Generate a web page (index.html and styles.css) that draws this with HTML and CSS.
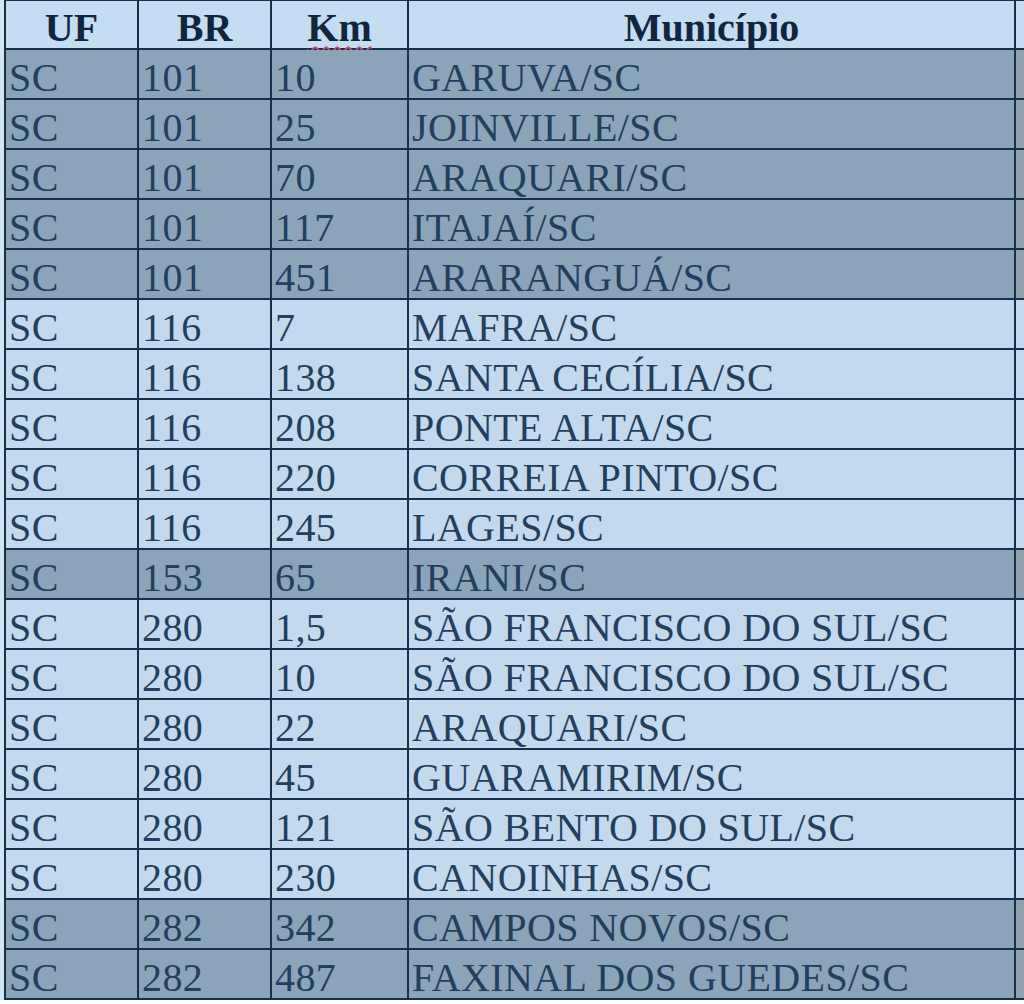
FILE: index.html
```html
<!DOCTYPE html>
<html lang="pt">
<head>
<meta charset="utf-8">
<title>Tabela</title>
<link rel="stylesheet" href="styles.css">
</head>
<body>
<div class="sheet">
  <div class="grid">
    <div class="cell head">UF</div>
    <div class="cell head">BR</div>
    <div class="cell head"><span class="spell">Km</span></div>
    <div class="cell head">Município</div>
    <div class="cell edge head-edge"></div>

    <div class="cell dark">SC</div><div class="cell dark">101</div><div class="cell dark">10</div><div class="cell dark">GARUVA/SC</div><div class="cell edge dark-edge"></div>
    <div class="cell dark">SC</div><div class="cell dark">101</div><div class="cell dark">25</div><div class="cell dark">JOINVILLE/SC</div><div class="cell edge dark-edge"></div>
    <div class="cell dark">SC</div><div class="cell dark">101</div><div class="cell dark">70</div><div class="cell dark">ARAQUARI/SC</div><div class="cell edge dark-edge"></div>
    <div class="cell dark">SC</div><div class="cell dark">101</div><div class="cell dark">117</div><div class="cell dark">ITAJAÍ/SC</div><div class="cell edge dark-edge"></div>
    <div class="cell dark">SC</div><div class="cell dark">101</div><div class="cell dark">451</div><div class="cell dark">ARARANGUÁ/SC</div><div class="cell edge dark-edge"></div>
    <div class="cell">SC</div><div class="cell">116</div><div class="cell">7</div><div class="cell">MAFRA/SC</div><div class="cell edge"></div>
    <div class="cell">SC</div><div class="cell">116</div><div class="cell">138</div><div class="cell">SANTA CECÍLIA/SC</div><div class="cell edge"></div>
    <div class="cell">SC</div><div class="cell">116</div><div class="cell">208</div><div class="cell">PONTE ALTA/SC</div><div class="cell edge"></div>
    <div class="cell">SC</div><div class="cell">116</div><div class="cell">220</div><div class="cell">CORREIA PINTO/SC</div><div class="cell edge"></div>
    <div class="cell">SC</div><div class="cell">116</div><div class="cell">245</div><div class="cell">LAGES/SC</div><div class="cell edge"></div>
    <div class="cell dark">SC</div><div class="cell dark">153</div><div class="cell dark">65</div><div class="cell dark">IRANI/SC</div><div class="cell edge dark-edge"></div>
    <div class="cell">SC</div><div class="cell">280</div><div class="cell">1,5</div><div class="cell">SÃO FRANCISCO DO SUL/SC</div><div class="cell edge"></div>
    <div class="cell">SC</div><div class="cell">280</div><div class="cell">10</div><div class="cell">SÃO FRANCISCO DO SUL/SC</div><div class="cell edge"></div>
    <div class="cell">SC</div><div class="cell">280</div><div class="cell">22</div><div class="cell">ARAQUARI/SC</div><div class="cell edge"></div>
    <div class="cell">SC</div><div class="cell">280</div><div class="cell">45</div><div class="cell">GUARAMIRIM/SC</div><div class="cell edge"></div>
    <div class="cell">SC</div><div class="cell">280</div><div class="cell">121</div><div class="cell">SÃO BENTO DO SUL/SC</div><div class="cell edge"></div>
    <div class="cell">SC</div><div class="cell">280</div><div class="cell">230</div><div class="cell">CANOINHAS/SC</div><div class="cell edge"></div>
    <div class="cell dark">SC</div><div class="cell dark">282</div><div class="cell dark">342</div><div class="cell dark">CAMPOS NOVOS/SC</div><div class="cell edge dark-edge"></div>
    <div class="cell dark">SC</div><div class="cell dark">282</div><div class="cell dark">487</div><div class="cell dark">FAXINAL DOS GUEDES/SC</div><div class="cell edge dark-edge"></div>
  </div>
</div>
</body>
</html>
```

FILE: styles.css
```css
html, body {
  margin: 0;
  padding: 0;
  background: #ffffff;
}

.sheet {
  width: 1024px;
  height: 1004px;
  overflow: hidden;
  background: #ffffff;
}

.grid {
  display: grid;
  grid-template-columns: 131px 131px 135px 605px 10px;
  grid-auto-rows: 48px;
  grid-template-rows: 47px;
  gap: 2px;
  padding: 1px 0 2px 2px;
  margin-left: 4px;
  width: 1030px;
  background: #15304b;
  box-shadow: -4px 0 0 #d3e5f3;
}

.cell {
  box-sizing: border-box;
  height: 48px;
  padding: 8px 0 0 3px;
  line-height: 40px;
  font-family: "Liberation Serif", "Times New Roman", serif;
  font-size: 40px;
  letter-spacing: 0.4px;
  color: #223f5d;
  background: #c3daee;
  white-space: nowrap;
}

.dark {
  background: #8ba4ba;
}

.head {
  height: 47px;
  padding: 7px 0 0 0;
  line-height: 40px;
  text-align: center;
  font-weight: bold;
  font-size: 40px;
  letter-spacing: 0;
  color: #10263f;
  background: #c5ddf2;
}

.spell {
  text-decoration-line: underline;
  text-decoration-style: wavy;
  text-decoration-color: #c8506e;
  text-decoration-thickness: 1.5px;
  text-underline-offset: 5px;
}

.edge {
  padding: 0;
  background: #c3daee;
}

.head-edge {
  height: 47px;
  background: #c5ddf2;
}

.dark-edge {
  background: #8fa2ad;
}
```
